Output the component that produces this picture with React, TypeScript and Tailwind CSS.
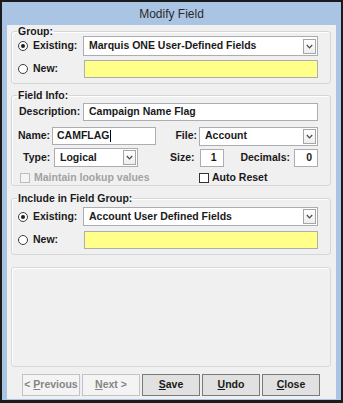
import React from 'react';

const font = "font-['Liberation_Sans',Arial,sans-serif]";

function Radio({ checked }: { checked?: boolean }) {
  return (
    <span className="w-[10px] h-[10px] rounded-full border border-[#3c3c3c] bg-white flex items-center justify-center shrink-0">
      {checked && <span className="w-[4px] h-[4px] rounded-full bg-[#1e1e1e]" />}
    </span>
  );
}

function Check({ disabled }: { disabled?: boolean }) {
  return (
    <span
      className={
        disabled
          ? 'w-[10px] h-[10px] border border-[#bdbdbd] bg-[#f4f4f4] shrink-0'
          : 'w-[10px] h-[10px] border border-[#333] bg-white shrink-0'
      }
    />
  );
}

function Select({ value, className }: { value: string; className?: string }) {
  return (
    <div className={`h-[19px] border border-[#abadb3] bg-white flex items-center pl-[5px] pr-[1px] ${className || ''}`}>
      <span className="flex-1 truncate text-[10.5px] font-bold text-[#1a1a1a]">{value}</span>
      <span className="w-[13px] h-[15px] border border-[#a6a6a6] bg-gradient-to-b from-white to-[#eeeeee] flex items-center justify-center">
        <svg width="7" height="5" viewBox="0 0 7 5">
          <path d="M0.8 1 L3.5 3.8 L6.2 1" fill="none" stroke="#4a4a4a" strokeWidth="1.2" />
        </svg>
      </span>
    </div>
  );
}

function Input({ value, className, caret }: { value?: string; className?: string; caret?: boolean }) {
  return (
    <div className={`h-[18px] border border-[#abadb3] bg-white flex items-center text-[10.5px] font-bold text-[#1a1a1a] ${className || ''}`}>
      {value}
      {caret && <span className="w-[1px] h-[12px] bg-black" />}
    </div>
  );
}

function Yellow({ className }: { className?: string }) {
  return <div className={`h-[18px] border border-[#abadb3] bg-[#ffff8a] ${className || ''}`} />;
}

function Group({ title, className, children }: { title: string; className?: string; children: React.ReactNode }) {
  return (
    <fieldset className={`w-[320px] border border-[#d5d5d5] rounded-[3px] shadow-[inset_1px_1px_0_white] pl-[6px] pr-[12px] ${className || ''}`}>
      <legend className="-ml-[1px] px-[1px] text-[10.5px] leading-[10px] font-bold text-[#1a1a1a]">{title}</legend>
      {children}
    </fieldset>
  );
}

function Btn({ label, u, rest, disabled }: { label?: string; u: string; rest: string; disabled?: boolean }) {
  return (
    <div
      className={
        disabled
          ? 'w-[58px] h-[22px] border border-[#c3c3c3] bg-[#f4f4f4] flex items-center justify-center text-[10.5px] font-bold text-[#858585]'
          : 'w-[58px] h-[22px] border border-[#7a7a7a] bg-[#e1e1e1] flex items-center justify-center text-[10.5px] font-bold text-[#1a1a1a]'
      }
    >
      <span className="whitespace-pre">
        {label}
        <span className="underline">{u}</span>
        {rest}
      </span>
    </div>
  );
}

export default function App() {
  return (
    <div className={`w-[343px] h-[403px] bg-[#1b1b1b] p-[2px] pb-[3px] ${font}`}>
      <div className="h-full bg-[#aac5e4] flex flex-col px-[5px] pb-[1px]">
        <div className="h-[23px] flex items-center justify-center text-[12px] text-[#2a2a2a]">Modify Field</div>
        <div className="flex-1 bg-[#f0f0f0] px-[4px] flex flex-col text-[10.5px] font-bold text-[#1a1a1a]">
          <Group title="Group:" className="mt-[1px] pb-[5px]">
            <div className="h-[20px] flex items-center">
              <div className="w-[65px] flex items-center gap-[5px]">
                <Radio checked />
                <span>Existing:</span>
              </div>
              <Select value="Marquis ONE User-Defined Fields" className="flex-1 h-[20px]" />
            </div>
            <div className="h-[18px] mt-[4px] flex items-center">
              <div className="w-[66px] flex items-center gap-[5px]">
                <Radio />
                <span>New:</span>
              </div>
              <Yellow className="flex-1" />
            </div>
          </Group>

          <Group title="Field Info:" className="mt-[6px] pb-[1px]">
            <div className="h-[18px] mt-[3px] flex items-center">
              <span className="w-[65px] pl-[1px]">Description:</span>
              <Input value="Campaign Name Flag" className="flex-1 pl-[5px]" />
            </div>
            <div className="h-[18px] mt-[6px] flex items-center">
              <span className="w-[34px]">Name:</span>
              <Input value="CAMFLAG" caret className="w-[104px] pl-[4px]" />
              <div className="ml-auto flex items-center gap-[2px]">
                <span>File:</span>
                <Select value="Account" className="w-[119px]" />
              </div>
            </div>
            <div className="h-[19px] mt-[3px] flex items-center">
              <span className="w-[36px] pl-[5px]">Type:</span>
              <Select value="Logical" className="w-[84px]" />
              <span className="ml-[32px]">Size:</span>
              <Input value="1" className="w-[24px] ml-[5px] justify-end pr-[6px]" />
              <div className="ml-auto flex items-center gap-[4px]">
                <span>Decimals:</span>
                <Input value="0" className="w-[24px] justify-end pr-[5px]" />
              </div>
            </div>
            <div className="h-[12px] mt-[5px] flex items-center">
              <div className="w-[181px] pl-[2px] flex items-center gap-[4px] text-[#a2a2a2]">
                <Check disabled />
                <span>Maintain lookup values</span>
              </div>
              <div className="flex items-center gap-[3px]">
                <Check />
                <span>Auto Reset</span>
              </div>
            </div>
          </Group>

          <Group title="Include in Field Group:" className="mt-[7px] pb-[5px]">
            <div className="h-[19px] mt-[4px] flex items-center">
              <div className="w-[65px] flex items-center gap-[5px]">
                <Radio checked />
                <span>Existing:</span>
              </div>
              <Select value="Account User Defined Fields" className="flex-1" />
            </div>
            <div className="h-[18px] mt-[5px] flex items-center">
              <div className="w-[66px] flex items-center gap-[5px]">
                <Radio />
                <span>New:</span>
              </div>
              <Yellow className="flex-1" />
            </div>
          </Group>

          <div className="w-[320px] h-[100px] mt-[12px] border border-[#d9d9d9] rounded-[3px] shadow-[inset_1px_1px_0_white]" />

          <div className="mt-[7px] pl-[11px] flex gap-[2px]">
            <Btn disabled label="< " u="P" rest="revious" />
            <Btn disabled u="N" rest="ext >" />
            <Btn u="S" rest="ave" />
            <Btn u="U" rest="ndo" />
            <Btn u="C" rest="lose" />
          </div>
        </div>
      </div>
    </div>
  );
}
